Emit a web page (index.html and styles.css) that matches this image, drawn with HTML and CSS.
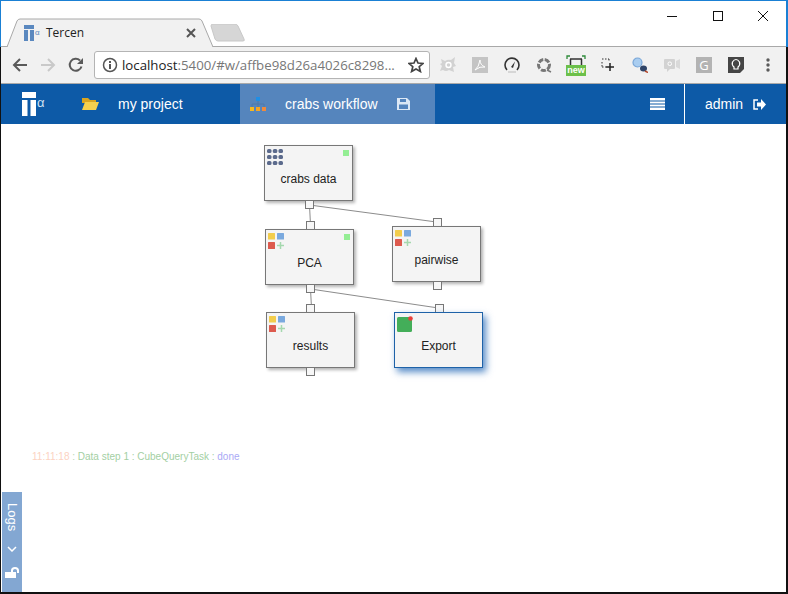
FILE: index.html
```html
<!DOCTYPE html>
<html lang="en">
<head>
    <meta charset="UTF-8">
    <title>Tercen</title>
    <link rel="stylesheet" href="styles.css">
</head>
<body>
    <div class="window">
        <div class="titlebar">
            <div class="tab">
                <svg class="tab-shape" width="208" height="30" viewBox="0 0 208 30">
                    <path d="M1 29 L11 3 Q12 1 14 1 L193 1 Q195 1 196 3 L207 29" fill="#f1f1f1" stroke="#a9a9a9"/>
                </svg>
                <svg class="favicon" width="17" height="16" viewBox="0 0 17 16">
                    <rect x="0" y="0" width="10" height="4" fill="#5a88bf"/>
                    <rect x="0" y="5" width="4" height="11" fill="#5a88bf"/>
                    <rect x="6" y="5" width="4" height="11" fill="#5a88bf"/>
                    <text x="11" y="10" class="favicon-alpha">α</text>
                </svg>
                <span class="tab-title">Tercen</span>
                <svg class="tab-close" width="10" height="10" viewBox="0 0 10 10">
                    <path d="M1 1 L9 9 M9 1 L1 9" stroke="#555" stroke-width="2"/>
                </svg>
            </div>
            <svg class="new-tab" width="35" height="18" viewBox="0 0 35 18">
                <path d="M1 2 Q1 0 3 0 L25 0 Q27 0 28 2 L34 15 Q35 17 33 17 L8 17 Q6 17 5 15 Z" fill="#d6d6d6" stroke="#c8c8c8"/>
            </svg>
            <div class="window-controls">
                <div class="win-btn"><svg width="12" height="12" viewBox="0 0 12 12"><path d="M1 6.500 H11" stroke="#111"/></svg></div>
                <div class="win-btn"><svg width="12" height="12" viewBox="0 0 12 12"><rect x="1.500" y="1.500" width="9" height="9" fill="none" stroke="#111"/></svg></div>
                <div class="win-btn"><svg width="12" height="12" viewBox="0 0 12 12"><path d="M1 1 L11 11 M11 1 L1 11" stroke="#111"/></svg></div>
            </div>
        </div>

        <div class="toolbar">
            <div class="nav-btn">
                <svg width="16" height="16" viewBox="0 0 16 16"><path d="M15 8 H2 M8 2 L2 8 L8 14" fill="none" stroke="#5a5a5a" stroke-width="2"/></svg>
            </div>
            <div class="nav-btn">
                <svg width="16" height="16" viewBox="0 0 16 16"><path d="M1 8 H14 M8 2 L14 8 L8 14" fill="none" stroke="#c9c9c9" stroke-width="2"/></svg>
            </div>
            <div class="nav-btn">
                <svg width="16" height="16" viewBox="0 0 16 16"><path d="M13.500 9.500 A6 6 0 1 1 12 3.500" fill="none" stroke="#5a5a5a" stroke-width="2"/><path d="M15 1 V7 H9 Z" fill="#5a5a5a"/></svg>
            </div>
            <div class="omnibox">
                <svg class="info-icon" width="16" height="16" viewBox="0 0 16 16">
                    <circle cx="8" cy="8" r="6.500" fill="none" stroke="#555" stroke-width="1.500"/>
                    <rect x="7" y="7" width="2" height="5" fill="#555"/>
                    <rect x="7" y="4" width="2" height="2" fill="#555"/>
                </svg>
                <span class="url"><span class="url-host">localhost</span>:5400/#w/affbe98d26a4026c8298...</span>
                <svg class="star" width="16" height="16" viewBox="0 0 16 16">
                    <path d="M8 1.500 L10 6 L15 6.500 L11.200 9.700 L12.400 14.500 L8 12 L3.600 14.500 L4.800 9.700 L1 6.500 L6 6 Z" fill="none" stroke="#444" stroke-width="1.700"/>
                </svg>
            </div>
            <div class="extensions">
                <div class="ext">
                    <svg width="16" height="16" viewBox="0 0 16 16"><path d="M1 2 L5 4 Q8 2 11 3 L15 0 L14 6 L16 9 L13 10 L14 15 L9 13 Q6 15 3 13 L0 14 L2 9 L0 7 L2 6 Z" fill="#d2d2d2"/><circle cx="8.500" cy="8" r="2.500" fill="none" stroke="#fff" stroke-width="1.400"/></svg>
                </div>
                <div class="ext">
                    <svg width="16" height="16" viewBox="0 0 16 16"><rect width="16" height="16" fill="#c4c4c4"/><path d="M3 13 Q7 10 8 3 Q8 8 13 10 Q8 9 3 13 Z" fill="none" stroke="#fff"/></svg>
                </div>
                <div class="ext">
                    <svg width="16" height="16" viewBox="0 0 16 16"><path d="M3 13 A7 7 0 1 1 13 13" fill="none" stroke="#333" stroke-width="1.600"/><path d="M7 10 L11 4.500 L9 11 Z" fill="#333"/><path d="M4 15 H12" stroke="#ccc" stroke-width="1.500"/></svg>
                </div>
                <div class="ext">
                    <svg width="16" height="16" viewBox="0 0 16 16"><circle cx="8" cy="8" r="5.500" fill="none" stroke="#777" stroke-width="3" stroke-dasharray="5 1.500"/><path d="M11 13 L15 15" stroke="#777" stroke-width="1.500"/></svg>
                </div>
                <div class="ext ext-new">
                    <svg width="20" height="12" viewBox="0 0 20 12"><path d="M1 4 V1 H4 M16 1 H19 V4" fill="none" stroke="#2e8b3a" stroke-width="1.300"/><path d="M4 4 H16 M4.500 4 V12 M15.500 4 V12" fill="none" stroke="#333" stroke-width="1.500"/></svg>
                    <span class="new-badge">new</span>
                </div>
                <div class="ext">
                    <svg width="14" height="14" viewBox="0 0 14 14"><path d="M1 1 H8 M1 4 V9 M1 9 H5 M8 1 V4" fill="none" stroke="#333" stroke-dasharray="1.500 1.500"/><path d="M9 5 V13 M5 9 H13" stroke="#222" stroke-width="1.500"/></svg>
                </div>
                <div class="ext">
                    <svg width="16" height="16" viewBox="0 0 16 16"><circle cx="5.500" cy="5.500" r="4.500" fill="#a9cdf0" stroke="#7aa7d8" stroke-width="1.200"/><ellipse cx="11.500" cy="11.500" rx="3.500" ry="3" fill="#2f4468"/><path d="M13 14 L16 15.500" stroke="#b5482c" stroke-width="1.500"/></svg>
                </div>
                <div class="ext">
                    <svg width="16" height="16" viewBox="0 0 16 16"><rect x="0" y="2" width="11" height="10" rx="1" fill="#d2d2d2"/><path d="M12 4 L16 2 V12 L12 10 Z" fill="#d9d9d9"/><rect x="4" y="5" width="3.500" height="3.500" rx="1.500" fill="none" stroke="#fff"/><path d="M3 12 V15 L6 12 Z" fill="#d2d2d2"/></svg>
                </div>
                <div class="ext">
                    <div class="ext-g">G</div>
                </div>
                <div class="ext">
                    <svg width="16" height="16" viewBox="0 0 16 16"><path d="M0 0 H16 V12 L12 16 H0 Z" fill="#454545"/><path d="M6 10 Q3.500 8 4.500 5 Q6 2.500 8 2.500 Q10 2.500 11.500 5 Q12.500 8 10 10 V12 H6 Z" fill="none" stroke="#fff" stroke-width="1.200"/></svg>
                </div>
                <div class="ext">
                    <svg width="4" height="14" viewBox="0 0 4 14"><circle cx="2" cy="2" r="1.700" fill="#5a5a5a"/><circle cx="2" cy="7" r="1.700" fill="#5a5a5a"/><circle cx="2" cy="12" r="1.700" fill="#5a5a5a"/></svg>
                </div>
            </div>
        </div>

        <div class="appbar">
            <div class="brand">
                <svg width="14" height="24" viewBox="0 0 14 24">
                    <rect width="14" height="6" fill="#fff"/>
                    <rect y="8" width="5.500" height="16" fill="#fff"/>
                    <rect x="8.500" y="8" width="5.500" height="16" fill="#fff"/>
                </svg>
                <span class="brand-alpha">α</span>
            </div>
            <div class="project">
                <svg class="folder" width="17" height="14" viewBox="0 0 17 14">
                    <path d="M0 1 H6 L8 3 H14 V6 H0 Z" fill="#d9a520"/>
                    <path d="M0 13 L3 5 H17 L14 13 Z" fill="#f5d04e"/>
                </svg>
                <span>my project</span>
            </div>
            <div class="workflow">
                <svg class="workflow-icon" width="16" height="14" viewBox="0 0 16 14">
                    <rect x="6" y="0" width="4" height="4" fill="#1e8fe6"/>
                    <path d="M2 10 V7 H14 V10 M8 4 V10" fill="none" stroke="#4f78aa"/>
                    <rect x="0" y="10" width="4" height="4" fill="#f5b921"/>
                    <rect x="6" y="10" width="4" height="4" fill="#f5a623"/>
                    <rect x="12" y="10" width="4" height="4" fill="#f08a3c"/>
                </svg>
                <span>crabs workflow</span>
                <svg class="save-icon" width="13" height="12" viewBox="0 0 13 12">
                    <path d="M0 0 H10 L13 3 V12 H0 Z" fill="#dce8f5"/>
                    <rect x="3" y="1" width="6" height="3" fill="#5585bd"/>
                    <rect x="2" y="6.500" width="9" height="4.500" fill="#5585bd"/>
                </svg>
            </div>
            <svg class="list-icon" width="15" height="12" viewBox="0 0 15 12">
                <path d="M0 0 H15 V2.500 H0 Z M0 3.500 H15 V5.500 H0 Z M0 6.500 H15 V8.500 H0 Z M0 9.500 H15 V12 H0 Z" fill="#fff"/>
            </svg>
            <div class="user">
                <span>admin</span>
                <svg class="exit-icon" width="13" height="11" viewBox="0 0 13 11">
                    <path d="M5 1 H1 V10 H5" fill="none" stroke="#fff" stroke-width="1.500"/>
                    <path d="M4 3.500 H8 V0 L13 5.500 L8 11 V7.500 H4 Z" fill="#fff"/>
                </svg>
            </div>
        </div>

        <div class="main">
            <div class="canvas">
                <svg class="links" width="785" height="326" viewBox="0 0 785 326">
                    <path d="M308.500 81 L309.500 101" />
                    <path d="M308.500 81 L435.500 98" />
                    <path d="M309.500 165 L310.500 184" />
                    <path d="M309.500 165 L437.500 184" />
                </svg>

                <div class="node node-crabs">
                    <svg class="node-icon" width="16" height="16" viewBox="0 0 16 16">
                        <g fill="#5b6a8c">
                            <rect x="0" y="0" width="4.500" height="4" rx="1.500"/><rect x="5.800" y="0" width="4.500" height="4" rx="1.500"/><rect x="11.500" y="0" width="4.500" height="4" rx="1.500"/>
                            <rect x="0" y="6" width="4.500" height="4" rx="1.500"/><rect x="5.800" y="6" width="4.500" height="4" rx="1.500"/><rect x="11.500" y="6" width="4.500" height="4" rx="1.500"/>
                            <rect x="0" y="12" width="4.500" height="4" rx="1.500"/><rect x="5.800" y="12" width="4.500" height="4" rx="1.500"/><rect x="11.500" y="12" width="4.500" height="4" rx="1.500"/>
                        </g>
                    </svg>
                    <span class="node-status"></span>
                    <span class="node-label">crabs data</span>
                </div>
                <span class="port port-crabs-out"></span>

                <span class="port port-pca-in"></span>
                <div class="node node-pca">
                    <svg class="node-icon" width="17" height="16" viewBox="0 0 17 16">
                        <rect x="0" y="0" width="7" height="6.500" rx="0.500" fill="#f2cd4c"/>
                        <rect x="9" y="0" width="7" height="6.500" rx="0.500" fill="#7aa9de"/>
                        <rect x="0" y="9" width="7" height="7" rx="0.500" fill="#dd5a4e"/>
                        <path d="M12.500 9 V16 M9 12.500 H16" stroke="#a5d8ae" stroke-width="1.500"/>
                    </svg>
                    <span class="node-status"></span>
                    <span class="node-label">PCA</span>
                </div>
                <span class="port port-pca-out"></span>

                <span class="port port-pairwise-in"></span>
                <div class="node node-pairwise">
                    <svg class="node-icon" width="17" height="16" viewBox="0 0 17 16">
                        <rect x="0" y="0" width="7" height="6.500" rx="0.500" fill="#f2cd4c"/>
                        <rect x="9" y="0" width="7" height="6.500" rx="0.500" fill="#7aa9de"/>
                        <rect x="0" y="9" width="7" height="7" rx="0.500" fill="#dd5a4e"/>
                        <path d="M12.500 9 V16 M9 12.500 H16" stroke="#a5d8ae" stroke-width="1.500"/>
                    </svg>
                    <span class="node-label">pairwise</span>
                </div>
                <span class="port port-pairwise-out"></span>

                <span class="port port-results-in"></span>
                <div class="node node-results">
                    <svg class="node-icon" width="17" height="16" viewBox="0 0 17 16">
                        <rect x="0" y="0" width="7" height="6.500" rx="0.500" fill="#f2cd4c"/>
                        <rect x="9" y="0" width="7" height="6.500" rx="0.500" fill="#7aa9de"/>
                        <rect x="0" y="9" width="7" height="7" rx="0.500" fill="#dd5a4e"/>
                        <path d="M12.500 9 V16 M9 12.500 H16" stroke="#a5d8ae" stroke-width="1.500"/>
                    </svg>
                    <span class="node-label">results</span>
                </div>
                <span class="port port-results-out"></span>

                <span class="port port-export-in"></span>
                <div class="node node-export">
                    <svg class="node-icon" width="17" height="16" viewBox="0 0 17 16">
                        <rect x="0" y="1" width="15" height="15" rx="1.500" fill="#43ae59"/>
                        <circle cx="13.500" cy="2.500" r="2.300" fill="#e8403a"/>
                    </svg>
                    <span class="node-label">Export</span>
                </div>
            </div>

            <div class="log-line">
                <span class="log-time">11:11:18</span> <span class="log-sep">:</span>
                <span class="log-msg">Data step 1 : CubeQueryTask :</span>
                <span class="log-state">done</span>
            </div>

            <div class="logs-tab">
                <span class="logs-title">Logs</span>
                <svg width="10" height="6" viewBox="0 0 10 6"><path d="M1 1 L5 5 L9 1" fill="none" stroke="#fff" stroke-width="1.500"/></svg>
                <svg width="14" height="11" viewBox="0 0 14 11">
                    <rect x="0" y="5" width="11" height="6" fill="#fff"/>
                    <path d="M7 5 V3.500 Q7 1 10 1 Q13 1 13 3.500 V6" fill="none" stroke="#fff" stroke-width="2"/>
                </svg>
            </div>
        </div>
    </div>
</body>
</html>
```

FILE: styles.css
```css
* {
    box-sizing: border-box;
}

body {
    margin: 0;
    padding: 0;
    background: #fff;
    font-family: "Liberation Sans", Arial, sans-serif;
}

.window {
    width: 788px;
    height: 594px;
    display: flex;
    flex-direction: column;
    background: #fff;
    border-style: solid;
    border-width: 1px 2px 2px 1px;
    border-image: linear-gradient(to bottom, #1a80d4 0, #1a80d4 47px, #111 47px, #111 100%) 1;
    overflow: hidden;
}

/* title bar with tabs */
.titlebar {
    height: 46px;
    flex-shrink: 0;
    display: flex;
    align-items: flex-end;
    background: #fff;
    border-bottom: 1px solid #a9a9a9;
    position: relative;
}

.tab {
    position: relative;
    width: 208px;
    height: 29px;
    margin-left: 5px;
    margin-bottom: -1px;
    display: flex;
    align-items: center;
    padding-left: 18px;
}

.tab-shape {
    position: absolute;
    left: 0;
    top: 0;
}

.favicon {
    position: relative;
    margin-right: 5px;
}

.favicon-alpha {
    font-family: "Liberation Sans", sans-serif;
    font-size: 8px;
    fill: #5a88bf;
}

.tab-title {
    position: relative;
    font-family: "Open Sans", sans-serif;
    font-size: 12px;
    color: #222;
}

.tab-close {
    position: relative;
    margin-left: auto;
    margin-right: 18px;
}

.new-tab {
    margin-bottom: 4px;
    margin-left: -4px;
}

.window-controls {
    margin-left: auto;
    align-self: flex-start;
    display: flex;
}

.win-btn {
    width: 45.500px;
    height: 29px;
    display: flex;
    align-items: center;
    justify-content: center;
}

/* browser toolbar */
.toolbar {
    height: 37px;
    flex-shrink: 0;
    display: flex;
    align-items: center;
    background: #f1f1f1;
    border-bottom: 1px solid #a9a9a9;
    padding-left: 5px;
}

.nav-btn {
    width: 28px;
    display: flex;
    justify-content: center;
}

.omnibox {
    width: 336px;
    height: 28px;
    margin-left: 4px;
    display: flex;
    align-items: center;
    padding: 0 5px 0 7px;
    background: #fff;
    border: 1px solid #b4b4b4;
    border-radius: 3px;
}

.url {
    margin-left: 4px;
    font-family: "Open Sans", sans-serif;
    font-size: 13.250px;
    color: #777;
    white-space: nowrap;
}

.url-host {
    color: #222;
}

.star {
    margin-left: auto;
}

.extensions {
    display: flex;
    align-items: center;
    margin-left: 2px;
}

.ext {
    width: 32px;
    height: 32px;
    display: flex;
    flex-direction: column;
    align-items: center;
    justify-content: center;
}

.new-badge {
    width: 20px;
    height: 11px;
    margin-top: -2px;
    background: #6cc04a;
    color: #fff;
    font-size: 9px;
    font-weight: bold;
    line-height: 11px;
    text-align: center;
}

.ext-g {
    width: 16px;
    height: 16px;
    background: #b3b3b3;
    color: #fff;
    font-family: "Open Sans", sans-serif;
    font-size: 13px;
    line-height: 16px;
    text-align: center;
}

/* tercen app bar */
.appbar {
    height: 40px;
    flex-shrink: 0;
    display: flex;
    align-items: center;
    background: #0d5aa7;
    color: #fff;
    font-size: 14px;
    padding-left: 21px;
}

.brand {
    width: 60px;
    display: flex;
    align-items: flex-start;
}

.brand-alpha {
    font-size: 13px;
    line-height: 16px;
    margin-top: 3px;
    margin-left: 1px;
    color: #cfe0f2;
}

.project {
    width: 158px;
    display: flex;
    align-items: center;
}

.folder {
    margin-right: 19px;
}

.workflow {
    width: 195px;
    height: 40px;
    display: flex;
    align-items: center;
    padding-left: 10px;
    background: #5585bd;
}

.workflow-icon {
    margin-right: 19px;
}

.save-icon {
    margin-left: 19px;
}

.list-icon {
    margin-left: 215px;
}

.user {
    height: 40px;
    margin-left: 19px;
    padding-left: 20px;
    display: flex;
    align-items: center;
    border-left: 1px solid #fff;
}

.exit-icon {
    margin-left: 10px;
}

/* workflow canvas */
.main {
    position: relative;
    flex-grow: 1;
}

.canvas {
    position: relative;
    height: 326px;
}

.links {
    position: absolute;
    left: 0;
    top: 0;
}

.links path {
    fill: none;
    stroke: #8c8c8c;
    stroke-width: 1;
}

.node {
    position: absolute;
    width: 89px;
    height: 56px;
    background: #f4f4f4;
    border: 1px solid #777;
    box-shadow: 2px 2px 3px rgba(0, 0, 0, 0.3);
    display: flex;
    align-items: center;
    justify-content: center;
}

.node-icon {
    position: absolute;
    left: 2px;
    top: 3px;
}

.node-status {
    position: absolute;
    right: 3px;
    top: 4px;
    width: 6px;
    height: 6px;
    background: #94ee94;
}

.node-label {
    margin-top: 12px;
    font-size: 12px;
    color: #222;
}

.node-crabs { left: 263px; top: 21px; }
.node-pca { left: 264px; top: 105px; }
.node-pairwise { left: 391px; top: 102px; }
.node-results { left: 265px; top: 188px; }

.node-export {
    left: 393px;
    top: 188px;
    border: 1px solid #1e62a8;
    box-shadow: 3px 4px 7px rgba(30, 100, 180, 0.75);
}

.port {
    position: absolute;
    width: 9px;
    height: 9px;
    background: #f7f7f7;
    border: 1px solid #777;
}

.port-crabs-out { left: 304px; top: 76px; }
.port-pca-in { left: 305px; top: 97px; }
.port-pca-out { left: 305px; top: 160px; }
.port-pairwise-in { left: 432px; top: 94px; }
.port-pairwise-out { left: 432px; top: 157px; }
.port-results-in { left: 305px; top: 180px; }
.port-results-out { left: 305px; top: 243px; }
.port-export-in { left: 434px; top: 180px; }

/* log output */
.log-line {
    padding: 1px 0 0 31px;
    font-size: 10px;
    line-height: 12px;
    white-space: nowrap;
}

.log-time { color: #fcd3c2; }
.log-sep { color: #b5d8b5; }
.log-msg { color: #a3cfa3; }
.log-state { color: #a9a9f5; }

.logs-tab {
    position: absolute;
    left: 1px;
    bottom: 0;
    width: 20px;
    height: 100px;
    display: flex;
    flex-direction: column;
    align-items: center;
    padding-top: 11px;
    gap: 15px;
    background: #83a7d2;
    color: #fff;
}

.logs-title {
    writing-mode: vertical-rl;
    font-size: 13px;
    line-height: 14px;
}
```
